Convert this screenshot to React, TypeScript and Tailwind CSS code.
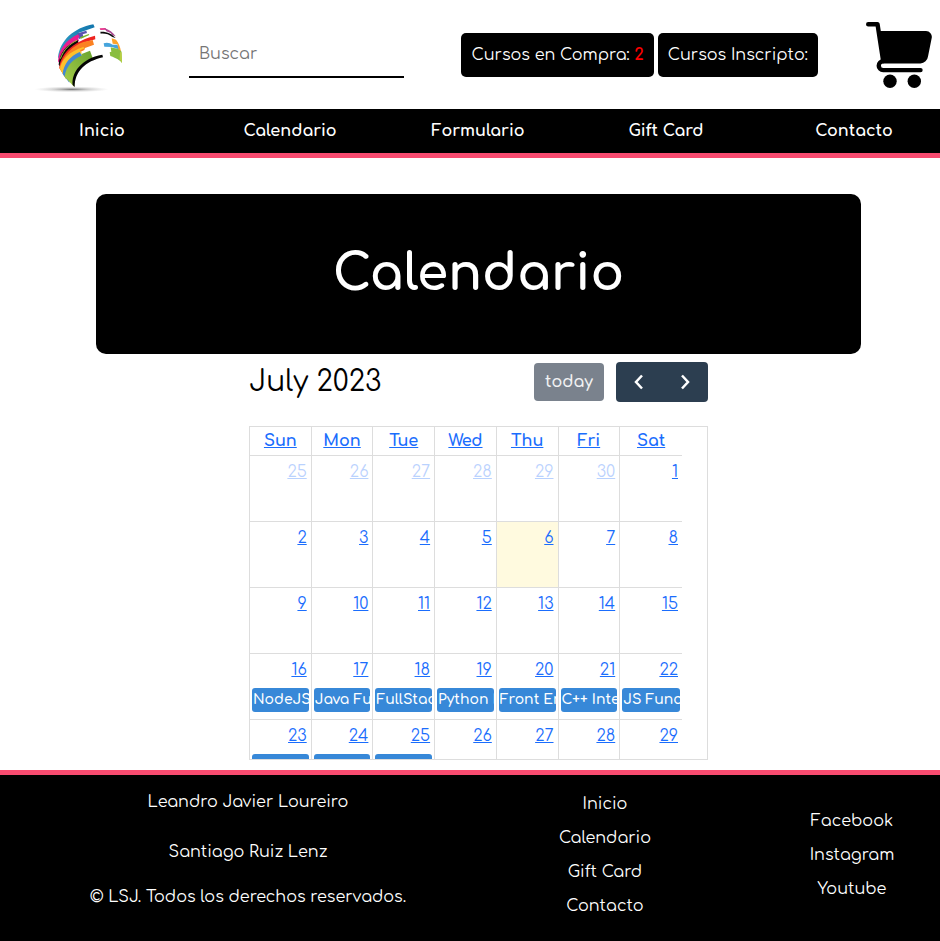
import React from "react";

const navLinks = ["Inicio", "Calendario", "Formulario", "Gift Card", "Contacto"];
const footerLinks = ["Inicio", "Calendario", "Gift Card", "Contacto"];
const socialLinks = ["Facebook", "Instagram", "Youtube"];
const weekDays = ["Sun", "Mon", "Tue", "Wed", "Thu", "Fri", "Sat"];

type Day = { day: number; muted?: boolean; today?: boolean; event?: string };

const weeks: Day[][] = [
  [
    { day: 25, muted: true },
    { day: 26, muted: true },
    { day: 27, muted: true },
    { day: 28, muted: true },
    { day: 29, muted: true },
    { day: 30, muted: true },
    { day: 1 },
  ],
  [{ day: 2 }, { day: 3 }, { day: 4 }, { day: 5 }, { day: 6, today: true }, { day: 7 }, { day: 8 }],
  [{ day: 9 }, { day: 10 }, { day: 11 }, { day: 12 }, { day: 13 }, { day: 14 }, { day: 15 }],
  [
    { day: 16, event: "NodeJS" },
    { day: 17, event: "Java Fullstack" },
    { day: 18, event: "FullStack" },
    { day: 19, event: "Python Inicial" },
    { day: 20, event: "Front End" },
    { day: 21, event: "C++ Intermedio" },
    { day: 22, event: "JS Funcional" },
  ],
  [
    { day: 23, event: "NodeJS" },
    { day: 24, event: "Java Fullstack" },
    { day: 25, event: "FullStack" },
    { day: 26 },
    { day: 27 },
    { day: 28 },
    { day: 29 },
  ],
];

function Logo() {
  return (
    <svg viewBox="0 0 330 285" className="mt-1.5 h-[95px] w-[110px] shrink-0" role="img" aria-label="LSJ">
      <defs>
        <radialGradient id="shadow">
          <stop offset="0" stopColor="#555" stopOpacity="0.85" />
          <stop offset="0.5" stopColor="#999" stopOpacity="0.4" />
          <stop offset="1" stopColor="#bbb" stopOpacity="0" />
        </radialGradient>
        <linearGradient id="teal" x1="0" y1="1" x2="1" y2="0">
          <stop offset="0" stopColor="#35a6c9" />
          <stop offset="1" stopColor="#1275ad" />
        </linearGradient>
        <linearGradient id="green" x1="0" y1="1" x2="1" y2="0">
          <stop offset="0" stopColor="#a9cf4a" />
          <stop offset="1" stopColor="#6aa42f" />
        </linearGradient>
      </defs>
      <ellipse cx="125" cy="238" rx="112" ry="9" fill="url(#shadow)" />
      <path d="M190 43 C130 54 90 92 84 142 L92 150 C104 112 124 86 150 74 L145 69 L194 52 Z" fill="url(#teal)" />
      <path d="M143 70 L169 62 L171 69 L158 73 L161 81 L146 88 Z" fill="#5b53b0" />
      <path d="M144 73 C108 90 86 118 84 154 L90 162 C98 132 118 106 147 92 L144 85 L149 81 Z" fill="#ea1d8f" />
      <path d="M150 82 L176 72 L178 75 L153 86 Z" fill="#76b82a" />
      <path d="M144 91 C108 104 88 130 86 164 L92 172 C100 141 119 117 146 103 Z" fill="#0a0a0a" />
      <path d="M91 146 C101 118 120 101 141 91" stroke="#a9c53b" strokeWidth="3" fill="none" />
      <path d="M195 77 C140 91 92 124 88 174 L96 186 C108 142 138 116 166 106 L160 98 L196 88 Z" fill="#ee2420" />
      <path d="M188 90 L192 104 L165 114 L163 120 C134 132 115 156 104 200 L88 174 C98 136 130 106 160 96 Z" fill="#fb8122" />
      <path d="M160 111 C119 124 94 148 90 177 L108 208 C112 170 130 142 156 130 L150 121 L164 115 Z" fill="#fdc02c" />
      <path d="M149 126 C120 139 101 162 98 192 L118 218 C118 182 132 156 158 140 Z" fill="#4289d1" />
      <path d="M153 133 L180 122 L188 144 C152 158 134 186 133 231 L104 200 C108 171 126 148 157 136 Z" fill="url(#green)" />
      <path d="M128 225 C124 188 154 145 217 134 L219 142 C166 154 134 184 134 231 Z" fill="#050505" />
      <path d="M209 55 L226 54 L231 59 L211 60 Z" fill="#e7328b" />
      <path d="M223 55 C237 59 250 68 257 79 L247 76 L242 69 L229 64 Z" fill="#a8478f" />
      <path d="M211 65 C231 64 246 71 257 84 L247 81 C237 73 226 70 212 71 Z" fill="#0a0a0a" />
      <path d="M221 100 C231 96 240 99 248 104 L262 104 L270 119 L246 111 L223 110 Z" fill="#45a4dc" />
      <path d="M245 85 L258 89 C266 99 271 110 273 125 L266 119 L262 103 L248 101 Z" fill="#fda329" />
      <path d="M242 112 L265 117 L274 124 L276 159 C270 151 260 145 241 138 L239 127 L244 125 Z" fill="#89bd3f" />
      <path d="M270 127 L275 127 L276 159 L269 148 Z" fill="#b7cf42" />
    </svg>
  );
}

function Cart() {
  return (
    <svg viewBox="0 0 66 66" className="size-[66px]" aria-hidden="true">
      <path
        d="M2.200 2.200h9.300L17.200 39.200a4.400 4.400 0 0 0 0 8.900H54.500"
        fill="none"
        stroke="#000"
        strokeWidth="4.400"
        strokeLinecap="round"
        strokeLinejoin="round"
      />
      <path d="M13 9h47a5.800 5.800 0 0 1 5.700 7l-3.700 18.500a8 8 0 0 1-7.500 7H17Z" />
      <circle cx="24" cy="59.300" r="6.700" />
      <circle cx="48.300" cy="59.300" r="6.700" />
    </svg>
  );
}

function Chevron({ d }: { d: string }) {
  return (
    <svg viewBox="0 0 16 16" className="size-4" fill="none" stroke="currentColor" strokeWidth="2.500" aria-hidden="true">
      <path d={d} />
    </svg>
  );
}

function Calendar() {
  return (
    <section className="mx-auto w-3/5 pt-2">
      <div className="flex items-center justify-between">
        <h2 className="text-[28px] leading-9">July 2023</h2>
        <div className="flex items-center gap-3">
          <button disabled className="h-[38px] rounded bg-[#7a828d] px-[11px] font-semibold text-white/90">
            today
          </button>
          <div className="flex h-10 rounded bg-[#2c3e50] text-white">
            <button aria-label="Previous month" className="flex w-[46px] items-center justify-center">
              <Chevron d="M11 1.500 5 8l6 6.500" />
            </button>
            <button aria-label="Next month" className="flex w-[46px] items-center justify-center">
              <Chevron d="M5 1.500 11 8l-6 6.500" />
            </button>
          </div>
        </div>
      </div>
      <div className="mt-6 h-[334px] overflow-hidden border border-[#ddd] pr-[25px]">
        <table className="w-full table-fixed border-separate border-spacing-0">
          <thead>
            <tr>
              {weekDays.map((name) => (
                <th key={name} className="h-[29px] border-r border-b border-[#ddd] p-0 font-bold last:border-r-0">
                  <a href="#" className="text-[#1a6dfd] underline">{name}</a>
                </th>
              ))}
            </tr>
          </thead>
          <tbody>
            {weeks.map((week, i) => (
              <tr key={i}>
                {week.map((cell) => (
                  <td
                    key={cell.day}
                    className={`h-[66px] border-r border-b border-[#ddd] p-0 align-top last:border-r-0 ${cell.today ? "bg-[#fffadf]" : ""}`}
                  >
                    <div className="flex h-8 items-center justify-end pr-1">
                      <a href="#" className={`text-[#1a6dfd] underline ${cell.muted ? "opacity-30" : ""}`}>
                        {cell.day}
                      </a>
                    </div>
                    {cell.event && (
                      <a
                        href="#"
                        className="mx-0.5 mt-0.5 block h-6 overflow-hidden rounded-[3px] bg-[#3788d8] px-px text-sm leading-[23px] font-semibold whitespace-nowrap text-white"
                      >
                        {cell.event}
                      </a>
                    )}
                  </td>
                ))}
              </tr>
            ))}
          </tbody>
        </table>
      </div>
    </section>
  );
}

export default function App() {
  return (
    <div className="flex min-h-screen flex-col bg-white font-[Comfortaa,Lato,sans-serif] text-base text-black">
      <header>
        <div className="flex h-[109px] items-center pr-2 pl-[30px]">
          <Logo />
          <input
            type="search"
            aria-label="Buscar"
            placeholder="Buscar"
            className="ml-[49px] h-[46px] w-[215px] border-b-2 border-black px-2.5 outline-none placeholder:text-[#757575]"
          />
          <div className="ml-auto flex gap-1">
            <button className="h-11 rounded-[5px] bg-black px-2.5 whitespace-nowrap text-white">
              Cursos en Compra: <b className="text-[#f00]">2</b>
            </button>
            <button className="h-11 rounded-[5px] bg-black px-2.5 whitespace-nowrap text-white">Cursos Inscripto:</button>
          </div>
          <a href="#" aria-label="Carrito" className="ml-12">
            <Cart />
          </a>
        </div>
        <nav className="border-b-[5px] border-[#f94b70] bg-black">
          <ul className="grid h-11 grid-cols-5 items-center text-center font-bold text-white">
            {navLinks.map((name) => (
              <li key={name} className="pl-4">
                <a href="#">{name}</a>
              </li>
            ))}
          </ul>
        </nav>
      </header>

      <main className="pt-9 pr-[79px] pb-2.5 pl-24">
        <h1 className="flex h-40 items-center justify-center rounded-[10px] bg-black text-[50px] font-bold text-white">
          Calendario
        </h1>
        <Calendar />
      </main>

      <footer className="grid flex-1 grid-cols-[496fr_218fr_226fr] border-t-[5px] border-[#f94b70] bg-black text-center text-white">
        <div className="flex flex-col pt-[15px]">
          <p>Leandro Javier Loureiro</p>
          <p className="mt-[26px]">Santiago Ruiz Lenz</p>
          <p className="mt-[21px]">© LSJ. Todos los derechos reservados.</p>
        </div>
        <ul className="flex flex-col gap-2.5 pt-[17px]">
          {footerLinks.map((name) => (
            <li key={name}>
              <a href="#">{name}</a>
            </li>
          ))}
        </ul>
        <ul className="flex flex-col gap-2.5 pt-[34px] pl-[50px]">
          {socialLinks.map((name) => (
            <li key={name}>
              <a href="#">{name}</a>
            </li>
          ))}
        </ul>
      </footer>
    </div>
  );
}
